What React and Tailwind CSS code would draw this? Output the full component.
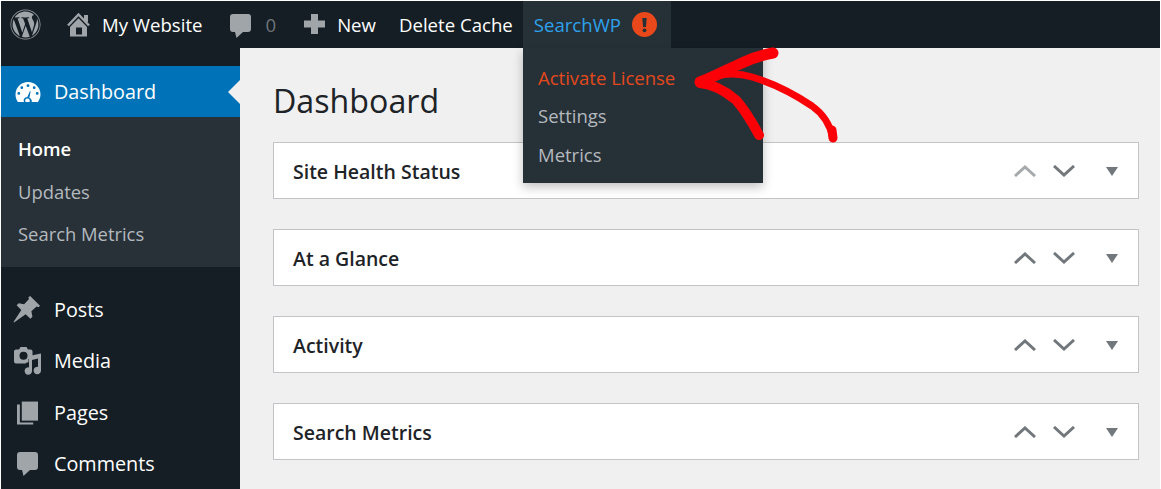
import { FaWordpress } from 'react-icons/fa';

const font = { fontFamily: '"Open Sans", "Noto Sans", sans-serif' };

const HomeIcon = () => (
  <svg viewBox="0 0 23 25" className="w-[23px] h-[25px] text-[#a0a5aa]" fill="currentColor">
    <path d="M1 13.500 11.500 2.500 22 13.500" fill="none" stroke="currentColor" strokeWidth="2.500" />
    <path d="M17 3h4v7h-4z" />
    <path fillRule="evenodd" d="M3 15 11.500 6.300 20 15v9.500H3zM9 15.500v7h6v-7z" />
  </svg>
);

const CommentIcon = ({ className }) => (
  <svg viewBox="0 0 21 24" className={className} fill="currentColor">
    <path d="M3 0h15a3 3 0 0 1 3 3v12a3 3 0 0 1-3 3h-5l-6.500 6-1.500-6H3a3 3 0 0 1-3-3V3a3 3 0 0 1 3-3z" />
  </svg>
);

const PlusIcon = () => (
  <svg viewBox="0 0 21 20" className="w-[21px] h-[20px] text-[#a0a5aa]" fill="currentColor">
    <path d="M7 0h7v6.500h7v7h-7V20H7v-6.500H0v-7h7z" />
  </svg>
);

const AlertBadge = () => (
  <svg viewBox="0 0 25 25" className="w-[25px] h-[25px]">
    <circle cx="12.500" cy="12.500" r="12.500" fill="#e9481a" />
    <path d="M10.300 6h4.400l-.8 9h-2.800z" fill="#263037" />
    <circle cx="12.500" cy="18.300" r="1.900" fill="#263037" />
  </svg>
);

const GaugeIcon = () => (
  <svg viewBox="0 0 26 20" className="w-[26px] h-[20px] text-white" fill="currentColor">
    <path fillRule="evenodd" d="M13 0C6 0 0.500 5.500 0.500 12.500c0 2.800.9 5.300 2.400 7.500h6.200c-.5-1-.6-2-.1-3 .6-1.300 2-2 3.300-2L15 9l.6.300-1.200 6.400c1.300.6 2.400 2 2.400 3.300 0 .3-.1.700-.2 1h6.300c1.500-2.200 2.600-4.700 2.600-7.500C25.500 5.500 20 0 13 0zM13 2.300a1.400 1.400 0 1 1 0 2.800 1.400 1.400 0 0 1 0-2.800zM6.800 4.300a1.400 1.400 0 1 1 0 2.800 1.400 1.400 0 0 1 0-2.800zM19.200 4.300a1.400 1.400 0 1 1 0 2.800 1.400 1.400 0 0 1 0-2.800zM3.800 10a1.400 1.400 0 1 1 0 2.800 1.400 1.400 0 0 1 0-2.800zM22.200 10a1.400 1.400 0 1 1 0 2.800 1.400 1.400 0 0 1 0-2.800zM12.600 16.500a2.200 2.200 0 0 0-2 3.500h3.800a2.200 2.200 0 0 0-1.800-3.500z" />
  </svg>
);

const PinIcon = () => (
  <svg viewBox="0 0 26 26" className="w-[27px] h-[27px] mr-[2px] text-[#a0a5aa]" fill="currentColor">
    <path d="M16.500 0 26 9.500l-1.500 1.300-1.800-.6-5 4.600 1 5.200-2 2-4.500-4.500L1 25.500l-.5-.5 7.500-11.500-4.500-4.500 2-2 5.200 1 4.700-5-.6-1.800z" />
  </svg>
);

const MediaIcon = () => (
  <svg viewBox="0 0 28 28" className="w-[28px] h-[28px] text-[#a0a5aa]" fill="currentColor">
    <path fillRule="evenodd" d="M6.500 0h6l1.500 2.500h2.500a2 2 0 0 1 2 2v6.500l-4 1v3.200a4 4 0 0 0-3 1.300H2a2 2 0 0 1-2-2V4.500a2 2 0 0 1 2-2h3zM9.500 4.800a4 4 0 1 0 0 8 4 4 0 0 0 0-8z" />
    <path d="M27 6.500V23.500a3.700 3.700 0 1 1-3-3.600v-8.300l-6 1.400v11a3.700 3.700 0 1 1-3-3.600V9z" />
  </svg>
);

const PagesIcon = () => (
  <svg viewBox="0 0 22 24" className="w-[21px] h-[24px] text-[#a0a5aa]" fill="currentColor">
    <path d="M5 0h17v20H5z" />
    <path d="M3 3v19h14v2H0V3z" />
  </svg>
);

const Chevron = ({ up, muted }) => (
  <svg viewBox="0 0 22 12" className={`w-[22px] h-[12px] ${muted ? 'text-[#a7aaad]' : 'text-[#72777c]'}`} fill="none" stroke="currentColor" strokeWidth="3">
    <path d={up ? 'M1 11 11 2l10 9' : 'M1 1l10 9 10-9'} />
  </svg>
);

const Widget = ({ title, muted }) => (
  <div className="h-[57px] bg-white border border-[#c3c4c7] flex items-center pl-[19px] pr-[20px]">
    <h2 className="text-[19.500px] font-semibold text-[#1d2327] flex-1 pt-[2px]">{title}</h2>
    <div className="flex items-center gap-[17px] mr-[31px]">
      <Chevron up muted={muted} />
      <Chevron />
    </div>
    <div className="w-0 h-0 mt-[2px] border-x-[6px] border-x-transparent border-t-[9px] border-t-[#72777c]" />
  </div>
);

const SideItem = ({ icon, label }) => (
  <div className="h-[51.500px] flex items-center text-white text-[19.800px]">
    <div className="w-[53px] flex justify-center">{icon}</div>
    <span>{label}</span>
  </div>
);

export default function App() {
  return (
    <div className="w-[1161px] h-[489px] overflow-hidden bg-white p-px relative" style={font}>
      {/* Admin bar */}
      <div className="h-[47px] bg-[#141e24] flex items-center text-white text-[18.600px]">
        <FaWordpress className="w-[31px] h-[31px] ml-[9px] text-[#a0a5aa]" />
        <div className="flex items-center ml-[26px] gap-[12px]">
          <HomeIcon />
          <span>My Website</span>
        </div>
        <div className="flex items-center ml-[28px] gap-[14px]">
          <CommentIcon className="w-[21px] h-[24px] text-[#a0a5aa] mt-[3px]" />
          <span className="text-[#6f7478]">0</span>
        </div>
        <div className="flex items-center ml-[28px] gap-[12px]">
          <PlusIcon />
          <span>New</span>
        </div>
        <span className="ml-[23px]">Delete Cache</span>
        <div className="ml-[10px] h-full w-[148px] bg-[#263037] flex items-center pl-[11px] gap-[11px] text-[#2ea2ec]">
          <span>SearchWP</span>
          <AlertBadge />
        </div>
      </div>

      <div className="flex h-[441px]">
        {/* Sidebar */}
        <div className="w-[239px] bg-[#141e24] pt-[18px]">
          <div className="relative h-[51px] bg-[#0073b8] flex items-center text-white text-[19.800px]">
            <div className="w-[53px] flex justify-center"><GaugeIcon /></div>
            <span className="pt-[1px]">Dashboard</span>
            <div className="absolute right-0 top-[14px] w-0 h-0 border-y-[12px] border-y-transparent border-r-[12px] border-r-[#f0f0f0]" />
          </div>
          <div className="h-[150px] bg-[#283138] pl-[17px] pt-[11px] text-[18.400px] leading-[42.500px] text-[#b4b9be]">
            <div className="text-white font-semibold">Home</div>
            <div>Updates</div>
            <div>Search Metrics</div>
          </div>
          <div className="pt-[17px]">
            <SideItem icon={<PinIcon />} label="Posts" />
            <SideItem icon={<MediaIcon />} label="Media" />
            <SideItem icon={<PagesIcon />} label="Pages" />
            <SideItem icon={<CommentIcon className="w-[21px] h-[24px] text-[#a0a5aa]" />} label="Comments" />
          </div>
        </div>

        {/* Content */}
        <div className="flex-1 bg-[#f0f0f0] pl-[33px] pr-[21px]">
          <h1 className="text-[32.200px] leading-[45px] text-[#1d2327] mt-[30px] mb-[19px]">Dashboard</h1>
          <div className="flex flex-col gap-[30px]">
            <Widget title="Site Health Status" muted />
            <Widget title="At a Glance" />
            <Widget title="Activity" />
            <Widget title="Search Metrics" />
          </div>
        </div>
      </div>

      {/* SearchWP dropdown */}
      <div className="absolute left-[523px] top-[48px] w-[240px] h-[135px] bg-[#263037] shadow-[0_4px_10px_rgba(0,0,0,0.25)] pl-[15px] pt-[10.700px] text-[18.500px] leading-[38.500px] text-[#b4b9be]">
        <div className="text-[#e2491c]">Activate License</div>
        <div>Settings</div>
        <div>Metrics</div>
      </div>

      {/* Red hand drawn arrow */}
      <svg className="absolute left-[680px] top-[40px] w-[170px] h-[110px]" viewBox="0 0 170 110" fill="none" stroke="#fb0007" strokeLinecap="round" strokeLinejoin="round">
        <path d="M93 13C82 15 72 18 62 23C50 28 36 36 20 42" strokeWidth="11" />
        <path d="M20 42C38 33 56 32 72 37C92 43 114 54 132 66C142 73 150 85 153 98" strokeWidth="7" />
        <path d="M152 90 153 98" strokeWidth="9" />
        <path d="M20 43C32 44 44 50 56 60C64 69 72 82 79 95" strokeWidth="10" />
      </svg>
    </div>
  );
}
